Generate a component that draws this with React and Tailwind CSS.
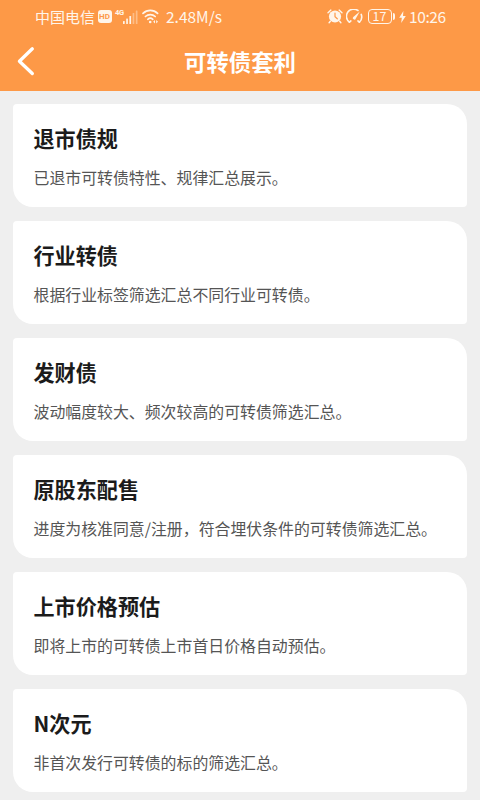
const cards = [
  { title: '退市债规', desc: '已退市可转债特性、规律汇总展示。' },
  { title: '行业转债', desc: '根据行业标签筛选汇总不同行业可转债。' },
  { title: '发财债', desc: '波动幅度较大、频次较高的可转债筛选汇总。' },
  { title: '原股东配售', desc: '进度为核准同意/注册，符合埋伏条件的可转债筛选汇总。' },
  { title: '上市价格预估', desc: '即将上市的可转债上市首日价格自动预估。' },
  { title: 'N次元', desc: '非首次发行可转债的标的筛选汇总。' },
]

const SignalIcon = () => (
  <svg className="w-[15px] h-[14px] shrink-0" viewBox="0 0 15 14" fill="currentColor">
    <rect x="0" y="11" width="1.7" height="3" rx="0.5" />
    <rect x="3.2" y="8.5" width="1.7" height="5.5" rx="0.5" />
    <rect x="6.4" y="6" width="1.7" height="8" rx="0.5" />
    <rect x="9.6" y="3" width="1.7" height="11" rx="0.5" opacity="0.4" />
    <rect x="12.8" y="0.5" width="1.7" height="13.5" rx="0.5" opacity="0.4" />
  </svg>
)

const WifiIcon = () => (
  <svg className="w-[17px] h-[15px] shrink-0" viewBox="0 0 17 15" fill="none" stroke="currentColor" strokeWidth="1.7" strokeLinecap="round">
    <path d="M1 4.3a10.6 10.6 0 0 1 14.6 0" />
    <path d="M3.4 7.5a7.2 7.2 0 0 1 9.8 0" />
    <path d="M5.8 10.3a3.7 3.7 0 0 1 5 0" />
    <circle cx="8.2" cy="13" r="1.3" fill="currentColor" stroke="none" />
    <path d="M13 10.9l-1.8 1.8 1.8 1.8zM14.2 10.9l1.8 1.8-1.8 1.8z" fill="currentColor" stroke="none" />
  </svg>
)

const AlarmIcon = () => (
  <svg className="w-[16px] h-[15px] shrink-0" viewBox="0 0 16 15" fill="none" stroke="currentColor" strokeLinecap="round">
    <circle cx="8" cy="7.5" r="6.1" fill="currentColor" stroke="none" />
    <path d="M1 3.7L3.9 1.1M15 3.7l-2.9-2.6M3.3 12.3l-1.2 1.4M12.7 12.3l1.2 1.4" strokeWidth="1.4" />
    <path d="M8 4.2v3.5l2.3 2.1" stroke="#fd9947" strokeWidth="1.2" />
  </svg>
)

const GaugeIcon = () => (
  <svg className="w-[17px] h-[15px] shrink-0" viewBox="0 0 17 15" fill="none" stroke="currentColor" strokeWidth="1.6" strokeLinecap="round">
    <path d="M3.4 13.2A7.2 7.2 0 0 1 12 1.5" />
    <path d="M15.2 5.4a7.2 7.2 0 0 1-1.8 7.8" />
    <path d="M3.4 13.2l1.5-1.3M13.4 13.2l-1.5-1.3" />
    <path d="M13.8 2.6L9.8 9.5a1.5 1.5 0 1 1-2.5-1.5z" fill="currentColor" stroke="none" />
  </svg>
)

const BoltIcon = () => (
  <svg className="w-[7px] h-[12px] shrink-0" viewBox="0 0 7 12" fill="currentColor">
    <path d="M4.4 0L0.2 6.7h2.6L2.2 12 6.8 4.9H4z" />
  </svg>
)

const StatusBar = () => (
  <div className="flex h-[33px] items-center pl-[35px] pr-[34px]">
    <span className="-mt-px w-[60px] whitespace-nowrap text-[15px] leading-none">中国电信</span>
    <span className="ml-[2.5px] flex h-[13px] w-[14px] shrink-0 items-center justify-center rounded-[3px] bg-[#fff5ea] font-['Roboto',sans-serif] text-[8px] font-bold leading-none text-[#fd9947]">
      HD
    </span>
    <span className="mb-2 ml-[3.5px] w-2 font-['Roboto',sans-serif] text-[7.5px] font-bold leading-none tracking-[-0.4px]">4G</span>
    <SignalIcon />
    <span className="ml-[4px] flex"><WifiIcon /></span>
    <span className="ml-[7px] whitespace-nowrap text-[15.5px] leading-none">2.48M/s</span>

    <div className="ml-auto flex items-center">
      <AlarmIcon />
      <span className="ml-[3px] flex"><GaugeIcon /></span>
      <span className="ml-[5px] flex h-[15px] w-6 items-center justify-center rounded-[4px] border-[1.5px] border-[#fff5ea] text-[12.5px] leading-none">
        17
      </span>
      <span className="ml-px h-[7px] w-[2px] rounded-r bg-[#fff5ea]" />
      <span className="ml-[4px] flex"><BoltIcon /></span>
      <span className="ml-[3.5px] w-[37px] whitespace-nowrap text-[15.5px] leading-none tracking-[-0.4px]">10:26</span>
    </div>
  </div>
)

const Card = ({ title, desc }) => (
  <div className="h-[103.5px] shrink-0 rounded-[20px] rounded-tl-[4px] rounded-br-[4px] bg-white pl-[20.5px] pt-[19px]">
    <h2 className="text-[21.1px] font-bold leading-[30px] text-[#1b1b1b]">{title}</h2>
    <p className="mt-[13px] whitespace-nowrap text-[15.9px] leading-6 text-[#555]">{desc}</p>
  </div>
)

export default function App() {
  return (
    <div className="flex h-[800px] w-[480px] flex-col overflow-hidden bg-[#efefef] font-['Noto_Sans_CJK_SC',sans-serif]">
      <header className="h-[90.5px] shrink-0 bg-[#fd9947] text-[#fff5ea]">
        <StatusBar />
        <div className="grid h-[56px] grid-cols-[60px_1fr_60px] items-center text-white">
          <button className="ml-[16.5px] w-[18px]" aria-label="返回">
            <svg className="block h-[30px] w-[18px]" viewBox="0 0 18 30" fill="none" stroke="currentColor" strokeWidth="3.3" strokeLinecap="round" strokeLinejoin="round">
              <path d="M15.3 2.8L2.4 15.2l12.9 12.3" />
            </svg>
          </button>
          <h1 className="text-center text-[22.4px] font-bold leading-none">可转债套利</h1>
        </div>
      </header>

      <main className="flex flex-col gap-[13.5px] px-[13px] pt-[13px]">
        {cards.map((card) => (
          <Card key={card.title} title={card.title} desc={card.desc} />
        ))}
      </main>
    </div>
  )
}
